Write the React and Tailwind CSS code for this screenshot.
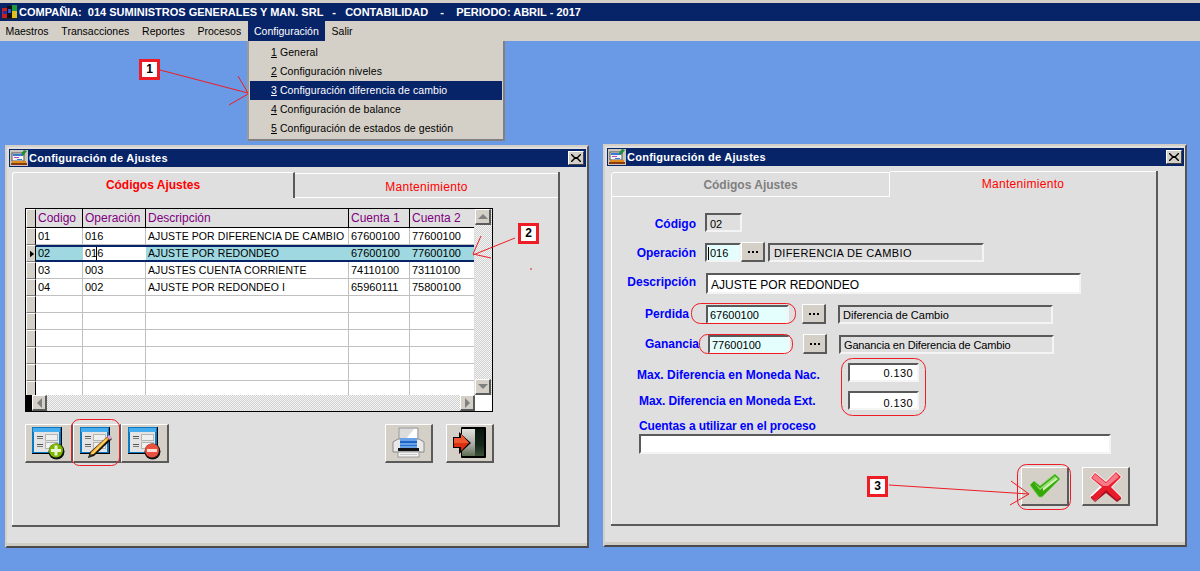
const NAVY = "bg-[#072469]";

function AppLogo() {
  return (
    <svg width="16" height="15" viewBox="0 0 16 15" className="shrink-0">
      <rect x="0" y="3" width="5" height="10" fill="#c81e28" />
      <rect x="1" y="6" width="4" height="3" fill="#2233aa" />
      <rect x="5" y="1" width="5" height="12" fill="#111" />
      <rect x="10" y="0" width="5" height="6" fill="#1f9a3a" />
      <rect x="10" y="6" width="5" height="8" fill="#e0c020" />
      <rect x="6" y="4" width="3" height="4" fill="#3355dd" />
      <rect x="0" y="13" width="15" height="1" fill="#222" />
    </svg>
  );
}

function WindowIcon() {
  return (
    <svg width="18" height="16" viewBox="0 0 18 16" className="shrink-0">
      <rect x="0" y="0" width="18" height="16" fill="#c9c6be" />
      <rect x="2" y="3" width="12" height="8" fill="#f4f4f4" stroke="#555" />
      <rect x="3" y="4" width="10" height="2" fill="#3a7ad0" />
      <rect x="4" y="7" width="5" height="1" fill="#c040c0" />
      <rect x="7" y="9" width="5" height="1" fill="#3a7ad0" />
      <rect x="2" y="11" width="14" height="2" fill="#e08a20" />
      <rect x="1" y="13" width="16" height="2" fill="#8a3a10" />
      <path d="M11 4l3-4 3 1-4 5z" fill="#1f8a3a" />
    </svg>
  );
}

function CloseButton() {
  return (
    <div className="w-[16px] h-[14px] bg-[#d4d0c8] border-t border-l border-t-white border-l-white border-r border-b border-r-[#444] border-b-[#444] flex items-center justify-center mr-[2px]">
      <svg width="10" height="8" viewBox="0 0 10 8">
        <path d="M1 0l3 3h2l3-3h1v1L7 4l3 3v1H9L6 5H4L1 8H0V7l3-3L0 1V0z" fill="#000" />
      </svg>
    </div>
  );
}

function TitleBar() {
  return (
    <div className={`${NAVY} h-[18px] flex items-center justify-between`}>
      <div className="flex items-center gap-[1px] pl-[1px]">
        <WindowIcon />
        <span className="text-white text-[11px] font-bold tracking-[0.25px]">Configuración de Ajustes</span>
      </div>
      <CloseButton />
    </div>
  );
}

// ventana base, la posicion va por props porque son ventanas sobre un escritorio
function DialogWindow({ className, children }) {
  return (
    <div className={`absolute bg-[#dfdfdf] border-t-[2px] border-t-[#d4d0c8] border-l-[2px] border-l-[#d4d0c8] border-r-[2px] border-r-[#555] border-b-[2px] border-b-[#4a4a4a] pt-[2px] pl-[2px] pr-[1px] ${className}`}>
      <TitleBar />
      {children}
      <div className="absolute left-0 right-0 bottom-0 h-[3px] bg-[#cfccc4]" />
    </div>
  );
}

function Raised({ className = "", children }) {
  return (
    <div className={`bg-[#d4d0c8] border-t border-l border-t-white border-l-white border-r-2 border-b-2 border-r-[#5a5a5a] border-b-[#5a5a5a] flex items-center justify-center ${className}`}>
      {children}
    </div>
  );
}

function Sunken({ className = "", children }) {
  return (
    <div className={`border-t-2 border-l-2 border-t-[#5a5a5a] border-l-[#5a5a5a] border-r-2 border-b-2 border-r-[#f4f4f4] border-b-[#f4f4f4] flex items-center pt-[3px] text-[11px] text-black overflow-hidden whitespace-nowrap ${className}`}>
      {children}
    </div>
  );
}

function DotsButton({ className = "" }) {
  return (
    <Raised className={`h-[20px] w-[24px] ${className}`}>
      <span className="flex gap-[2px]">
        <i className="w-[2px] h-[2px] bg-black" />
        <i className="w-[2px] h-[2px] bg-black" />
        <i className="w-[2px] h-[2px] bg-black" />
      </span>
    </Raised>
  );
}

const rows = [
  ["01", "016", "AJUSTE POR DIFERENCIA DE CAMBIO", "67600100", "77600100"],
  ["02", "016", "AJUSTE POR REDONDEO", "67600100", "77600100"],
  ["03", "003", "AJUSTES CUENTA CORRIENTE", "74110100", "73110100"],
  ["04", "002", "AJUSTE POR REDONDEO I", "65960111", "75800100"],
  ["", "", "", "", ""],
  ["", "", "", "", ""],
  ["", "", "", "", ""],
  ["", "", "", "", ""],
  ["", "", "", "", ""],
  ["", "", "", "", ""],
];

const headers = ["Codigo", "Operación", "Descripción", "Cuenta 1", "Cuenta 2"];
const gridCols = "grid grid-cols-[10px_47px_63px_203px_61px_65px]";

function HeaderRow() {
  return (
    <div className={`${gridCols} h-[19px]`}>
      <div className="bg-[#d4d0c8] border-t border-l border-t-white border-l-white border-r border-r-black border-b border-b-black" />
      {headers.map((h) => (
        <div key={h} className="bg-[#dfdfdf] border-r border-b border-black pl-[2px] text-[#800080] text-[12px] leading-[18px] whitespace-nowrap overflow-hidden">
          {h}
        </div>
      ))}
    </div>
  );
}

function GridRow({ row, selected }) {
  const cell = selected
    ? "bg-[#9fd8e0] border-y-2 border-[#072469] leading-[13px]"
    : "bg-white border-b border-b-[#c0c0c0] leading-[16px]";
  return (
    <div className={`${gridCols} h-[17px] text-[11px] text-black`}>
      <div className="bg-[#d4d0c8] border-t border-l border-t-white border-l-white border-r border-r-black border-b border-b-[#808080] flex items-center">
        {selected && (
          <svg width="6" height="8" viewBox="0 0 6 8" className="ml-[3px]">
            <path d="M0 0l5 4-5 4z" fill="#000" />
          </svg>
        )}
      </div>
      {row.map((v, i) => (
        <div
          key={i}
          className={`pl-[2px] whitespace-nowrap overflow-hidden ${i === 2 ? "text-[10.500px] tracking-[0.08px]" : ""} ${cell} ${selected ? "" : "border-r border-r-[#c0c0c0]"} ${selected && i === 1 ? "!bg-white relative" : ""}`}
        >
          {v}
          {selected && i === 1 && <i className="absolute left-[13px] top-0 bottom-0 w-[1px] bg-black" />}
        </div>
      ))}
    </div>
  );
}

function ScrollArrow({ dir }) {
  const d = { up: "M0 6l5-5 5 5z", down: "M0 1h10l-5 5z", left: "M6 0v10l-5-5z", right: "M1 0v10l5-5z" }[dir];
  return (
    <svg width={dir === "up" || dir === "down" ? 10 : 7} height={dir === "up" || dir === "down" ? 7 : 10} viewBox={dir === "up" || dir === "down" ? "0 0 10 7" : "0 0 7 10"}>
      <path d={d} fill="#808080" />
    </svg>
  );
}

const checker = "bg-[repeating-conic-gradient(#cfcfcf_0_25%,#f6f6f6_0_50%)] bg-[length:2px_2px]";

function DataGrid() {
  return (
    <div className="w-[468px] h-[204px] border border-black ml-[12px] mt-[10px] flex flex-col">
      <div className="flex h-[186px]">
        <div className="w-[449px] h-[186px] overflow-hidden bg-white">
          <HeaderRow />
          {rows.map((r, i) => (
            <GridRow key={i} row={r} selected={i === 1} />
          ))}
        </div>
        <div className={`w-[17px] ml-[1px] flex flex-col justify-between ${checker}`}>
          <Raised className="h-[16px] w-[16px]"><ScrollArrow dir="up" /></Raised>
          <Raised className="h-[16px] w-[16px]"><ScrollArrow dir="down" /></Raised>
        </div>
      </div>
      <div className="flex h-[16px]">
        <div className="w-[6px] bg-black" />
        <Raised className="h-[16px] w-[15px]"><ScrollArrow dir="left" /></Raised>
        <div className={`flex-1 ${checker}`} />
        <Raised className="h-[16px] w-[15px]"><ScrollArrow dir="right" /></Raised>
        <div className="w-[17px] bg-white" />
      </div>
    </div>
  );
}

function FormGlyph() {
  return (
    <>
      <rect x="0" y="0" width="30" height="27" fill="#000" />
      <rect x="0" y="0" width="29" height="26" fill="#0c78c4" />
      <rect x="1" y="1" width="27" height="4" fill="#46aeee" />
      <rect x="2" y="5" width="25" height="20" fill="#e4e4e4" />
      <rect x="13.500" y="7.500" width="12" height="6" fill="#efefef" stroke="#b5b5b5" />
      <rect x="13.500" y="15.500" width="12" height="6" fill="#efefef" stroke="#b5b5b5" />
      <rect x="5" y="9" width="6" height="1" fill="#555" />
      <rect x="5" y="11" width="6" height="1" fill="#777" />
      <rect x="5" y="17" width="6" height="1" fill="#555" />
      <rect x="5" y="19" width="6" height="1" fill="#777" />
    </>
  );
}

function AddIcon() {
  return (
    <svg width="33" height="33" viewBox="0 0 33 33">
      <FormGlyph />
      <circle cx="24.500" cy="24.500" r="8" fill="#111" />
      <circle cx="24" cy="23.500" r="7" fill="#7db500" />
      <path d="M22.500 18.500h3V22H29v3h-3.500v3.500h-3V25H19v-3h3.500z" fill="#e8f5d0" />
    </svg>
  );
}

function EditIcon() {
  return (
    <svg width="33" height="33" viewBox="0 0 33 33">
      <FormGlyph />
      <path d="M8 31l2-6L28 9l4 3-18 17z" fill="#111" />
      <path d="M10 28l1-3L27 10l2 2-15 15z" fill="#f0a020" />
      <path d="M11 27l15-15 1 1-14 14z" fill="#ffd977" />
      <path d="M27 10l2-2 3 2-2 3z" fill="#d8a0d8" />
      <path d="M8 31l2-4 2 2z" fill="#333" />
    </svg>
  );
}

function RemoveIcon() {
  return (
    <svg width="33" height="33" viewBox="0 0 33 33">
      <FormGlyph />
      <circle cx="24.500" cy="24.500" r="8" fill="#111" />
      <circle cx="24" cy="23.500" r="7" fill="#ea5040" />
      <rect x="19" y="22" width="10" height="3" fill="#f8e0d8" />
    </svg>
  );
}

function PrinterIcon() {
  return (
    <svg width="33" height="32" viewBox="0 0 33 32">
      <path d="M7 1h19v13H7z" fill="#dcdcdc" stroke="#9a9a9a" />
      <path d="M14 12L22 2h3v10z" fill="#ffffff" />
      <path d="M1 15l5-3h21l5 3v10H1z" fill="#e8e8e8" stroke="#8a8a8a" />
      <rect x="8" y="11" width="17" height="10" fill="#6aa2e6" />
      <rect x="8" y="14" width="17" height="2" fill="#1f62c8" />
      <rect x="8" y="18" width="17" height="1" fill="#2a70d0" />
      <rect x="6" y="21" width="21" height="3" fill="#111" />
      <rect x="6" y="25" width="21" height="5" fill="#f6f6f6" stroke="#9a9a9a" />
      <rect x="8" y="27" width="17" height="1" fill="#c8c8c8" />
    </svg>
  );
}

function ExitIcon() {
  return (
    <svg width="33" height="32" viewBox="0 0 33 32">
      <defs>
        <linearGradient id="doorPanel" x1="0" y1="0" x2="0" y2="1">
          <stop offset="0" stopColor="#e2e2de" />
          <stop offset="0.6" stopColor="#a8a8a2" />
          <stop offset="1" stopColor="#5e6e52" />
        </linearGradient>
        <linearGradient id="doorDark" x1="0" y1="0" x2="0" y2="1">
          <stop offset="0" stopColor="#0a140c" />
          <stop offset="0.6" stopColor="#14281a" />
          <stop offset="1" stopColor="#3c5038" />
        </linearGradient>
      </defs>
      <rect x="8" y="0" width="25" height="31" rx="1" fill="#000" />
      <rect x="22" y="2" width="9" height="27" fill="url(#doorDark)" />
      <path d="M9 2h13v27H9z" fill="url(#doorPanel)" />
      <path d="M0 10h6V5l12 11L6 27v-6H0z" fill="#000" />
      <path d="M1 11h7V7l8 9-8 8v-4H1z" fill="#d83010" />
      <path d="M1 11h7V7l8 9H1z" fill="#f05830" />
    </svg>
  );
}

function CheckIcon() {
  return (
    <svg width="32" height="26" viewBox="0 0 32 26">
      <path d="M1 12l4-4 6 5L26 1l5 5-18 18h-3z" fill="#36a80a" stroke="#7ad060" strokeWidth="0.8" />
      <path d="M5 10l6 5L26 3l3 3-15 9-3 2z" fill="#8fdd6a" />
      <path d="M14 15l13-10 2 1-15 12z" fill="#cdf0b4" />
    </svg>
  );
}

function CrossIcon() {
  return (
    <svg width="32" height="32" viewBox="0 0 32 32">
      <path d="M0 8l5-6 11 9L26 1l6 6-10 10 10 10-5 4-11-9-11 9-5-5 10-10z" fill="#ffffff" />
      <path d="M1 8l4-5 11 9L26 2l5 5-10 10 10 10-4 4-11-10L5 31l-4-4 11-10z" fill="#ea1c2c" />
      <path d="M2 8l3-4 11 9L26 3l3 4-11 9H13z" fill="#f87a88" />
      <path d="M5 31l11-11 11 10 4-3v2l-4 3-11-9-11 9-4-4v-2z" fill="#a81020" />
    </svg>
  );
}

function FirstWindow() {
  return (
    <DialogWindow className="left-[5px] top-[145px] w-[584px] h-[403px]">
      <div className="ml-[3px] mr-[26px] mt-[5px] h-[355px] flex flex-col border-b-2 border-b-[#5a5a5a] border-r-2 border-r-[#5a5a5a]">
        <div className="flex h-[26px] shrink-0">
          <div className="w-[283px] border-t border-l border-t-white border-l-white rounded-tl-[3px] border-r-2 border-r-[#5a5a5a] text-center text-[#ff0000] text-[12px] font-bold leading-[24px]">
            Códigos Ajustes
          </div>
          <div className="flex-1 mt-[1px] border-t border-t-white border-b border-b-white text-center text-[#ff0000] text-[12px] leading-[26px] tracking-[0.3px]">
            Mantenimiento
          </div>
        </div>
        <div className="flex-1 border-l border-l-white">
          <DataGrid />
          <div className="flex ml-[12px] mt-[12px]">
            <Raised className="w-[48px] h-[39px]"><AddIcon /></Raised>
            <Raised className="w-[48px] h-[39px]"><EditIcon /></Raised>
            <Raised className="w-[48px] h-[39px]"><RemoveIcon /></Raised>
            <Raised className="w-[48px] h-[39px] ml-[216px]"><PrinterIcon /></Raised>
            <Raised className="w-[48px] h-[39px] ml-[13px]"><ExitIcon /></Raised>
          </div>
        </div>
      </div>
    </DialogWindow>
  );
}

const labelCls = "text-[#0000ff] text-[12px] font-bold whitespace-nowrap";

function SecondWindow() {
  return (
    <DialogWindow className="left-[603px] top-[144px] w-[584px] h-[403px]">
      <div className="ml-[4px] mr-[26px] mt-[5px] h-[355px] flex flex-col border-b-2 border-b-[#5a5a5a] border-r-2 border-r-[#5a5a5a]">
        <div className="flex h-[26px] shrink-0">
          <div className="w-[279px] mt-[1px] border-t border-l border-t-white border-l-white rounded-tl-[3px] border-b border-b-white border-r border-r-white text-center text-[#808080] text-[12px] font-bold leading-[25px]">
            Códigos Ajustes
          </div>
          <div className="flex-1 border-t border-t-white text-center text-[#ff0000] text-[12px] leading-[24px] tracking-[0.3px]">
            Mantenimiento
          </div>
        </div>
        <div className="flex-1 border-l border-l-white text-[11px]">
          <div className="flex mt-[16px] h-[19px] items-center">
            <div className={`w-[84px] text-right mr-[9px] pt-[3px] ${labelCls}`}>Código</div>
            <Sunken className="w-[37px] h-[19px] pl-[3px] !pt-[4px]">02</Sunken>
          </div>
          <div className="flex mt-[10px] h-[20px] items-center">
            <div className={`w-[84px] text-right mr-[9px] pt-[2px] ${labelCls}`}>Operación</div>
            <Sunken className="w-[36px] h-[19px] pl-[1px] bg-[#e4fdfd]"><i className="w-[1px] h-[13px] bg-black mr-[1px]" />016</Sunken>
            <DotsButton />
            <Sunken className="w-[216px] h-[19px] ml-[3px] pl-[4px] tracking-[0.35px]">DIFERENCIA DE CAMBIO</Sunken>
          </div>
          <div className="flex mt-[11px] h-[21px] items-center">
            <div className={`w-[84px] text-right mr-[10px] mb-[3px] ${labelCls}`}>Descripción</div>
            <Sunken className="w-[375px] h-[21px] pl-[3px] bg-white text-[12px]">AJUSTE POR REDONDEO</Sunken>
          </div>
          <div className="flex mt-[10px] h-[20px] items-center">
            <div className={`w-[77px] text-right mr-[17px] ${labelCls}`}>Perdida</div>
            <Sunken className="w-[83px] h-[19px] pl-[2px] bg-[#e4fdfd]">67600100</Sunken>
            <DotsButton className="ml-[13px]" />
            <Sunken className="w-[215px] h-[19px] ml-[12px] pl-[3px] text-[10px]">Diferencia de Cambio</Sunken>
          </div>
          <div className="flex mt-[10px] h-[20px] items-center">
            <div className={`w-[87px] text-right mr-[9px] ${labelCls}`}>Ganancia</div>
            <Sunken className="w-[82px] h-[19px] pl-[2px] bg-[#e4fdfd]">77600100</Sunken>
            <DotsButton className="ml-[13px]" />
            <Sunken className="w-[215px] h-[19px] ml-[12px] pl-[3px] text-[10px] tracking-[-0.15px]">Ganancia en Diferencia de Cambio</Sunken>
          </div>
          <div className="flex mt-[9px] h-[19px] items-center">
            <div className={`w-[211px] ml-[25px] pt-[5px] ${labelCls} text-[11px]`}>Max. Diferencia en Moneda Nac.</div>
            <Sunken className="w-[71px] h-[19px] bg-white justify-end pr-[4px] !pt-[1px] tracking-[0.4px]">0.130</Sunken>
          </div>
          <div className="flex mt-[9px] h-[19px] items-center">
            <div className={`w-[209px] ml-[27px] tracking-[-0.1px] ${labelCls} text-[11px]`}>Max. Diferencia en Moneda Ext.</div>
            <Sunken className="w-[71px] h-[19px] bg-white justify-end pr-[4px] !pt-[5px] tracking-[0.4px]">0.130</Sunken>
          </div>
          <div className={`ml-[27px] mt-[8px] h-[16px] leading-[16px] tracking-[-0.1px] ${labelCls} text-[11px]`}>Cuentas a utilizar en el proceso</div>
          <Sunken className="ml-[27px] w-[472px] h-[20px] bg-white" />
          <div className="flex mt-[13px] ml-[409px]">
            <Raised className="w-[48px] h-[39px]"><CheckIcon /></Raised>
            <Raised className="w-[48px] h-[39px] ml-[13px]"><CrossIcon /></Raised>
          </div>
        </div>
      </div>
    </DialogWindow>
  );
}

const menus = ["Maestros", "Transacciones", "Reportes", "Procesos", "Configuración", "Salir"];
const subItems = [
  ["1", " General"],
  ["2", " Configuración niveles"],
  ["3", " Configuración diferencia de cambio"],
  ["4", " Configuración de balance"],
  ["5", " Configuración de estados de gestión"],
];

function TopBars() {
  return (
    <div className="absolute top-0 left-0 w-[1200px]">
      <div className="h-[3px] bg-[#d4d0c8]" />
      <div className={`${NAVY} h-[18px] flex items-center gap-[1px] pl-[2px]`}>
        <AppLogo />
        <span className="text-white text-[11px] font-bold whitespace-pre">
          COMPAÑIA:  014 SUMINISTROS GENERALES Y MAN. SRL   -   CONTABILIDAD    -    PERIODO: ABRIL - 2017
        </span>
      </div>
      <div className="h-[20px] bg-[#d4d0c8] flex text-[10.500px] leading-[20px]">
        {menus.map((m, i) => (
          <div
            key={m}
            className={`px-[6.400px] ${i === 0 ? "ml-[-1px]" : ""} ${m === "Configuración" ? `${NAVY} text-white` : "text-black"}`}
          >
            {m}
          </div>
        ))}
      </div>
    </div>
  );
}

function SubMenu() {
  return (
    <div className="absolute left-[247px] top-[41px] w-[258px] h-[100px] bg-[#d4d0c8] border-r-2 border-b-2 border-[#808080] border-l-2 border-l-[#9a9a9a] pt-[2px] text-[10.500px]">
      {subItems.map(([n, label], i) => (
        <div
          key={n}
          className={`h-[19px] leading-[19px] pl-[21px] mx-[1px] whitespace-pre tracking-[0.08px] ${i === 2 ? `${NAVY} text-white` : "text-black"}`}
        >
          <span className="underline">{n}</span>
          {label}
        </div>
      ))}
    </div>
  );
}

function Callout({ n, className }) {
  return (
    <div className={`absolute w-[21px] h-[21px] border-[3px] border-[#ee1c25] bg-white text-black text-[12px] font-bold leading-[15px] text-center ${className}`}>
      {n}
    </div>
  );
}

// flechas y ovalos rojos pintados encima de la captura
function Annotations() {
  return (
    <>
      <svg width="1200" height="571" viewBox="0 0 1200 571" className="absolute left-0 top-0 pointer-events-none" fill="none" stroke="#ee1c25" strokeWidth="1">
        <path d="M160 70L248 93M238 76l10 17M229 105l19-11" />
        <path d="M515 238L473 255M481 236l-8 18M491 258l-18-4" />
        <path d="M530 269h2" />
        <path d="M889 485L1029 494M1011 481l18 13M1010 505l19-11" />
        <rect x="71.500" y="419.500" width="48" height="46" rx="8" />
        <rect x="691.500" y="303.500" width="104" height="20" rx="9" />
        <rect x="699.500" y="334.500" width="93" height="19" rx="8" />
        <rect x="841.500" y="358.500" width="84" height="57" rx="11" />
        <rect x="1017.500" y="464.500" width="53" height="45" rx="9" />
      </svg>
      <Callout n="1" className="left-[139px] top-[59px]" />
      <Callout n="2" className="left-[518px] top-[223px]" />
      <Callout n="3" className="left-[867px] top-[476px]" />
    </>
  );
}

export default function App() {
  return (
    <div className="relative w-[1200px] h-[571px] overflow-hidden bg-[#6a9ae5] font-['Liberation_Sans',Arial,sans-serif]">
      <TopBars />
      <SubMenu />
      <FirstWindow />
      <SecondWindow />
      <Annotations />
    </div>
  );
}
